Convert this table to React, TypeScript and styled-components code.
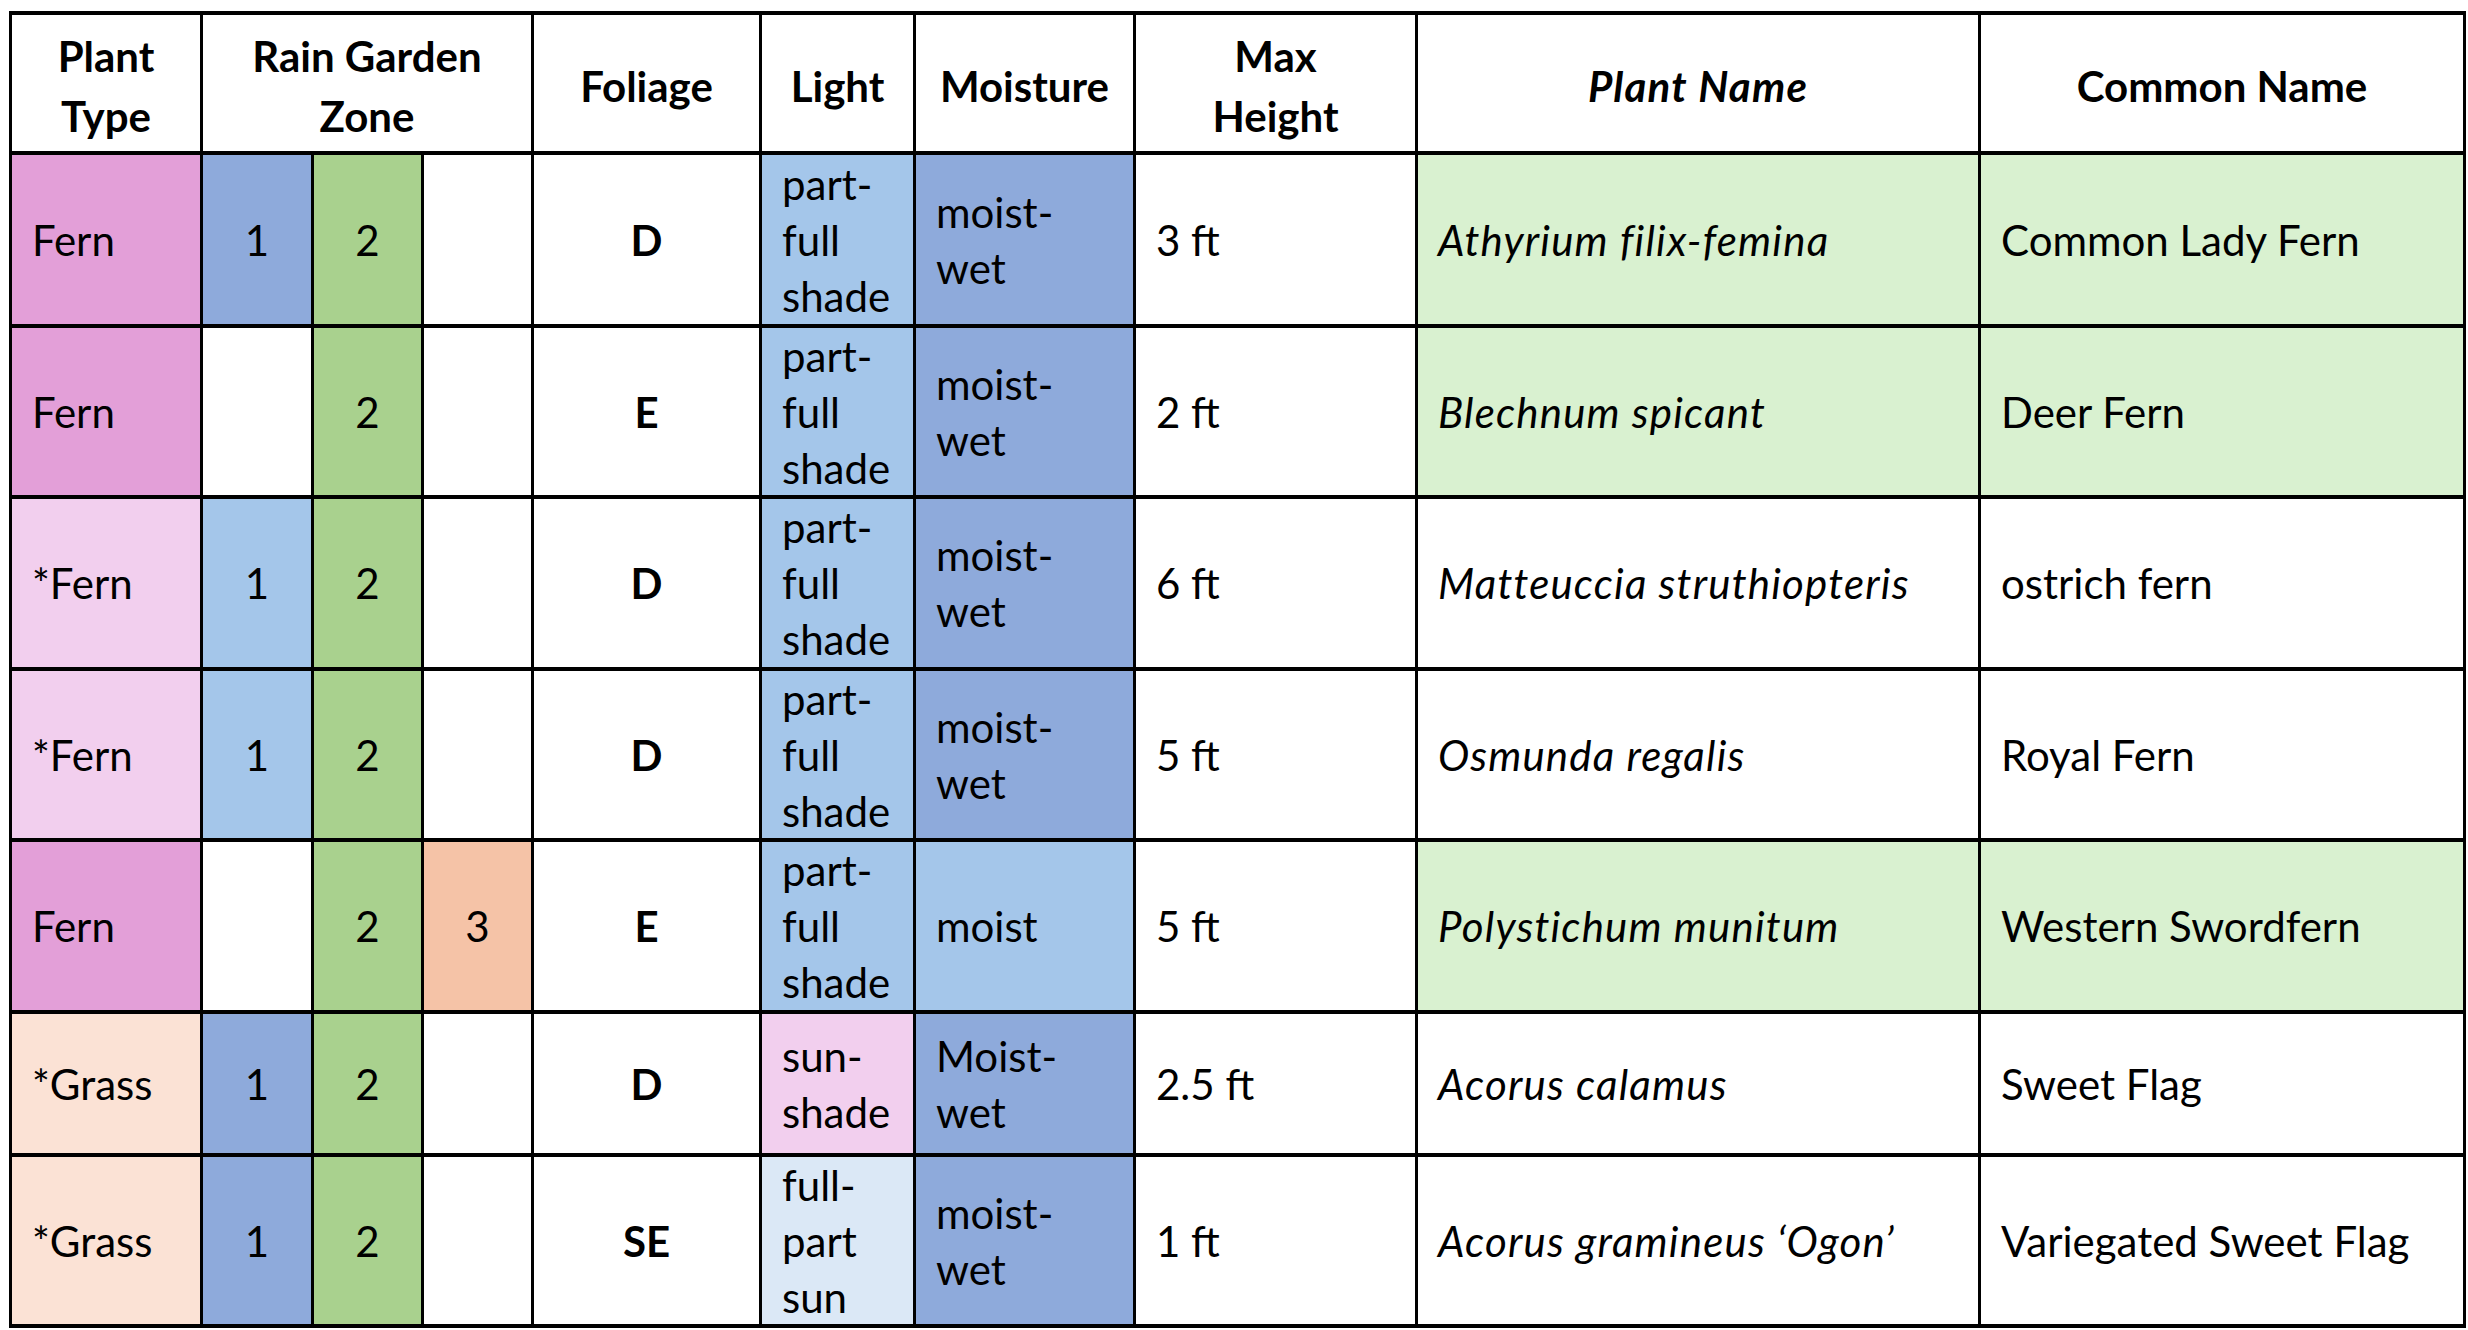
import styled, { createGlobalStyle } from 'styled-components';

const GlobalStyle = createGlobalStyle`
	html, body {
		margin: 0;
		padding: 0;
		background: #ffffff;
	}
`;

const palette = {
	white: '#ffffff',
	pink: '#e39fd8',
	lightPink: '#f2cfee',
	peach: '#fbe2d5',
	blue: '#8eaadb',
	skyBlue: '#a4c6ea',
	paleBlue: '#dbe8f6',
	green: '#a9d18e',
	orange: '#f5c3a7',
	mint: '#d9f1d0',
};

type Tone = keyof typeof palette;

type Plant = {
	type: string;
	typeBg: Tone;
	zones: [string, Tone][];
	foliage: string;
	light: string[];
	lightBg: Tone;
	moisture: string[];
	moistureBg: Tone;
	height: string;
	latin: string;
	common: string;
	nameBg: Tone;
};

const plants: Plant[] = [
	{
		type: 'Fern',
		typeBg: 'pink',
		zones: [['1', 'blue'], ['2', 'green'], ['', 'white']],
		foliage: 'D',
		light: ['part-', 'full', 'shade'],
		lightBg: 'skyBlue',
		moisture: ['moist-', 'wet'],
		moistureBg: 'blue',
		height: '3 ft',
		latin: 'Athyrium filix-femina',
		common: 'Common Lady Fern',
		nameBg: 'mint',
	},
	{
		type: 'Fern',
		typeBg: 'pink',
		zones: [['', 'white'], ['2', 'green'], ['', 'white']],
		foliage: 'E',
		light: ['part-', 'full', 'shade'],
		lightBg: 'skyBlue',
		moisture: ['moist-', 'wet'],
		moistureBg: 'blue',
		height: '2 ft',
		latin: 'Blechnum spicant',
		common: 'Deer Fern',
		nameBg: 'mint',
	},
	{
		type: '*Fern',
		typeBg: 'lightPink',
		zones: [['1', 'skyBlue'], ['2', 'green'], ['', 'white']],
		foliage: 'D',
		light: ['part-', 'full', 'shade'],
		lightBg: 'skyBlue',
		moisture: ['moist-', 'wet'],
		moistureBg: 'blue',
		height: '6 ft',
		latin: 'Matteuccia struthiopteris',
		common: 'ostrich fern',
		nameBg: 'white',
	},
	{
		type: '*Fern',
		typeBg: 'lightPink',
		zones: [['1', 'skyBlue'], ['2', 'green'], ['', 'white']],
		foliage: 'D',
		light: ['part-', 'full', 'shade'],
		lightBg: 'skyBlue',
		moisture: ['moist-', 'wet'],
		moistureBg: 'blue',
		height: '5 ft',
		latin: 'Osmunda regalis',
		common: 'Royal Fern',
		nameBg: 'white',
	},
	{
		type: 'Fern',
		typeBg: 'pink',
		zones: [['', 'white'], ['2', 'green'], ['3', 'orange']],
		foliage: 'E',
		light: ['part-', 'full', 'shade'],
		lightBg: 'skyBlue',
		moisture: ['moist'],
		moistureBg: 'skyBlue',
		height: '5 ft',
		latin: 'Polystichum munitum',
		common: 'Western Swordfern',
		nameBg: 'mint',
	},
	{
		type: '*Grass',
		typeBg: 'peach',
		zones: [['1', 'blue'], ['2', 'green'], ['', 'white']],
		foliage: 'D',
		light: ['sun-', 'shade'],
		lightBg: 'lightPink',
		moisture: ['Moist-', 'wet'],
		moistureBg: 'blue',
		height: '2.5 ft',
		latin: 'Acorus calamus',
		common: 'Sweet Flag',
		nameBg: 'white',
	},
	{
		type: '*Grass',
		typeBg: 'peach',
		zones: [['1', 'blue'], ['2', 'green'], ['', 'white']],
		foliage: 'SE',
		light: ['full-', 'part', 'sun'],
		lightBg: 'paleBlue',
		moisture: ['moist-', 'wet'],
		moistureBg: 'blue',
		height: '1 ft',
		latin: 'Acorus gramineus \u2018Ogon\u2019',
		common: 'Variegated Sweet Flag',
		nameBg: 'white',
	},
];

const Grid = styled.div`
	display: grid;
	grid-template-columns: 188px 108px 107px 107px 225px 151px 217px 279px 560px 482px;
	grid-template-rows: 136px 169px 167px 168px 167px 168px 139px 167px;
	column-gap: 3px;
	row-gap: 4px;
	width: max-content;
	margin: 11px 0 0 9px;
	border-style: solid;
	border-color: #000;
	border-width: 4px 3px;
	background: #000;
	font-family: Lato, 'Open Sans', sans-serif;
	font-size: 42px;
	color: #000;
`;

const Cell = styled.div<{ $bg?: Tone; $center?: boolean; $bold?: boolean; $italic?: boolean }>`
	display: flex;
	flex-direction: column;
	justify-content: center;
	align-items: ${(props) => (props.$center ? 'center' : 'flex-start')};
	text-align: ${(props) => (props.$center ? 'center' : 'left')};
	padding: 0 ${(props) => (props.$center ? '0' : '20px')};
	background: ${(props) => palette[props.$bg ?? 'white']};
	font-weight: ${(props) => (props.$bold ? 700 : 400)};
	font-style: ${(props) => (props.$italic ? 'italic' : 'normal')};
	letter-spacing: ${(props) => (props.$italic ? '1.2px' : 'normal')};
	line-height: 56px;
	white-space: nowrap;
	overflow: hidden;
`;

const HeadCell = styled(Cell)<{ $span?: number }>`
	grid-column: span ${(props) => props.$span ?? 1};
	line-height: 60px;
	padding-top: 5px;
`;

function Lines({ lines }: { lines: string[] }) {
	return (
		<span>
			{lines.map((line, i) => (
				<span key={i}>
					{i > 0 && <br />}
					{line}
				</span>
			))}
		</span>
	);
}

function Row({ plant }: { plant: Plant }) {
	return (
		<>
			<Cell $bg={plant.typeBg}>{plant.type}</Cell>
			{plant.zones.map(([label, tone], i) => (
				<Cell key={i} $bg={tone} $center>
					{label}
				</Cell>
			))}
			<Cell $center $bold>{plant.foliage}</Cell>
			<Cell $bg={plant.lightBg}>
				<Lines lines={plant.light} />
			</Cell>
			<Cell $bg={plant.moistureBg}>
				<Lines lines={plant.moisture} />
			</Cell>
			<Cell>{plant.height}</Cell>
			<Cell $bg={plant.nameBg} $italic>{plant.latin}</Cell>
			<Cell $bg={plant.nameBg}>{plant.common}</Cell>
		</>
	);
}

function App() {
	return (
		<>
			<GlobalStyle />
			<Grid>
				<HeadCell $center $bold>
					<Lines lines={['Plant', 'Type']} />
				</HeadCell>
				<HeadCell $center $bold $span={3}>
					<Lines lines={['Rain Garden', 'Zone']} />
				</HeadCell>
				<HeadCell $center $bold>Foliage</HeadCell>
				<HeadCell $center $bold>Light</HeadCell>
				<HeadCell $center $bold>Moisture</HeadCell>
				<HeadCell $center $bold>
					<Lines lines={['Max', 'Height']} />
				</HeadCell>
				<HeadCell $center $bold $italic>Plant Name</HeadCell>
				<HeadCell $center $bold>Common Name</HeadCell>

				{plants.map((plant, row) => (
					<Row key={row} plant={plant} />
				))}
			</Grid>
		</>
	);
}

export default App;
